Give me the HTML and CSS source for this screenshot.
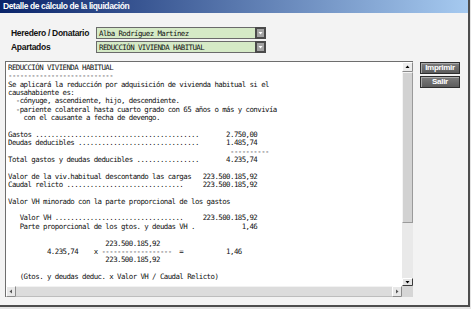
FILE: index.html
```html
<!DOCTYPE html>
<html lang="es">
<head>
  <meta charset="UTF-8" />
  <meta name="viewport" content="width=device-width, initial-scale=1.0"/>
  <title>Detalle de cálculo de la liquidación</title>
  <link rel="stylesheet" href="styles.css">
</head>
<body>
  <div class="window">
    <div class="titlebar">Detalle de cálculo de la liquidación</div>

    <div class="content">
      <div class="fields">
        <div class="field">
          <label>Heredero / Donatario</label>
          <div class="combo">
            <span class="combo-value">Alba Rodríguez Martínez</span>
            <svg class="combo-btn" width="11" height="12" viewBox="0 0 11 12">
              <rect x="0" y="0" width="11" height="12" fill="#4a4a4a"/>
              <rect x="2" y="2" width="7" height="8" fill="#a3a3a3"/>
              <polygon points="3.5,5 7.5,5 5.5,7.5" fill="#fff"/>
            </svg>
          </div>
        </div>
        <div class="field">
          <label>Apartados</label>
          <div class="combo">
            <span class="combo-value">REDUCCIÓN VIVIENDA HABITUAL</span>
            <svg class="combo-btn" width="11" height="12" viewBox="0 0 11 12">
              <rect x="0" y="0" width="11" height="12" fill="#4a4a4a"/>
              <rect x="2" y="2" width="7" height="8" fill="#a3a3a3"/>
              <polygon points="3.5,5 7.5,5 5.5,7.5" fill="#fff"/>
            </svg>
          </div>
        </div>
      </div>

      <div class="main">
        <div class="report">
<pre class="report-text">REDUCCIÓN VIVIENDA HABITUAL
---------------------------
Se aplicará la reducción por adquisición de vivienda habitual si el
causahabiente es:
  -cónyuge, ascendiente, hijo, descendiente.
  -pariente colateral hasta cuarto grado con 65 años o más y convivía
    con el causante a fecha de devengo.

Gastos ..........................................       2.750,00
Deudas deducibles ...............................       1.485,74
                                                         ----------
Total gastos y deudas deducibles ................       4.235,74

Valor de la viv.habitual descontando las cargas   223.500.185,92
Caudal relicto ..............................     223.500.185,92

Valor VH minorado con la parte proporcional de los gastos

   Valor VH .................................     223.500.185,92
   Parte proporcional de los gtos. y deudas VH .            1,46

                         223.500.185,92
          4.235,74    x ------------------  =           1,46
                         223.500.185,92

   (Gtos. y deudas deduc. x Valor VH / Caudal Relicto)
</pre>
          <div class="vscroll">
            <svg class="sb-btn" width="11" height="10" viewBox="0 0 11 10">
              <rect x="0" y="0" width="11" height="10" fill="#ececec"/>
              <path d="M0.5 9.5 V0.5 H10.5" stroke="#fff" fill="none"/>
              <path d="M0.5 9.5 H10.5 V0.5" stroke="#8a8a8a" fill="none"/>
              <polygon points="3.5,6 7.5,6 5.5,3.5" fill="#000"/>
            </svg>
            <div class="vthumb"></div>
            <div class="vtrack"></div>
            <svg class="sb-btn" width="11" height="8" viewBox="0 0 11 8">
              <rect x="0" y="0" width="11" height="8" fill="#e4e4e4"/>
              <path d="M0.5 7.5 V0.5 H10.5" stroke="#fff" fill="none"/>
              <path d="M0.5 7.5 H10.5 V0.5" stroke="#3a3a3a" fill="none"/>
              <polygon points="3.5,3 7.5,3 5.5,5.5" fill="#000"/>
            </svg>
          </div>
          <div class="hscroll">
            <svg class="sb-btn" width="10" height="11" viewBox="0 0 10 11">
              <rect x="0" y="0" width="10" height="11" fill="#e8e8e8"/>
              <path d="M0.5 10.5 V0.5 H9.5" stroke="#fff" fill="none"/>
              <path d="M0.5 10.5 H9.5 V0.5" stroke="#8a8a8a" fill="none"/>
              <polygon points="6,3.5 6,7.5 3.5,5.5" fill="#555"/>
            </svg>
            <div class="htrack"></div>
            <svg class="sb-btn" width="10" height="11" viewBox="0 0 10 11">
              <rect x="0" y="0" width="10" height="11" fill="#e8e8e8"/>
              <path d="M0.5 10.5 V0.5 H9.5" stroke="#fff" fill="none"/>
              <path d="M0.5 10.5 H9.5 V0.5" stroke="#8a8a8a" fill="none"/>
              <polygon points="4,3.5 4,7.5 6.5,5.5" fill="#555"/>
            </svg>
          </div>
          <div class="corner"></div>
        </div>

        <div class="actions">
          <button class="btn">Imprimir</button>
          <button class="btn">Salir</button>
        </div>
      </div>
    </div>
  </div>
</body>
</html>
```

FILE: styles.css
```css
body {
  margin: 0;
  background: #e4e4e4;
  font-family: "Liberation Sans", Arial, sans-serif;
}

.window {
  width: 470px;
  height: 307px;
  box-sizing: border-box;
  display: flex;
  flex-direction: column;
  background: #f3f3f3;
  border-right: 2px solid #4d4d4d;
  border-bottom: 2px solid #4d4d4d;
}

.titlebar {
  height: 13px;
  line-height: 13px;
  padding-left: 3px;
  background: linear-gradient(to right, #0a246a, #a6caf0);
  color: #fff;
  font-weight: bold;
  font-size: 8.5px;
  letter-spacing: -0.4px;
}

.content {
  flex: 1;
  padding: 14px 0 0 5px;
}

.fields {
  display: flex;
  flex-direction: column;
  gap: 2px;
  padding-left: 6px;
}

.field {
  display: flex;
  align-items: center;
  height: 12px;
}

.field label {
  width: 85px;
  font-weight: bold;
  font-size: 8.5px;
  letter-spacing: -0.3px;
  color: #111;
}

.combo {
  width: 170px;
  height: 12px;
  box-sizing: border-box;
  display: flex;
  align-items: center;
  border: 1px solid #6a6a6a;
  border-right: none;
  background: #d5eac6;
}

.combo-value {
  flex: 1;
  padding-left: 2px;
  font-family: "DejaVu Sans Mono", monospace;
  font-size: 7.4px;
  letter-spacing: -0.555px;
  color: #111;
}

.combo-btn {
  display: block;
  margin: -1px 0;
}

.main {
  display: flex;
  margin-top: 8px;
}

.report {
  width: 408px;
  height: 236px;
  box-sizing: border-box;
  display: grid;
  grid-template-columns: 1fr 11px;
  grid-template-rows: 1fr 11px;
  border-top: 1px solid #6e6e6e;
  border-left: 1px solid #6e6e6e;
  background: #fff;
}

.report-text {
  margin: 0;
  padding: 2px 0 0 2px;
  overflow: hidden;
  white-space: pre;
  font-family: "DejaVu Sans Mono", monospace;
  font-size: 7.4px;
  letter-spacing: -0.555px;
  line-height: 8.36px;
  color: #111;
}

.sb-btn {
  display: block;
  flex: none;
}

.vscroll {
  display: flex;
  flex-direction: column;
}

.vthumb {
  height: 151px;
  box-sizing: border-box;
  background: #d2d2d2;
  border: 1px solid #9a9a9a;
  border-top-color: #f4f4f4;
  border-left-color: #f4f4f4;
}

.vtrack {
  flex: 1;
  background: #e9e9e9;
}

.hscroll {
  display: flex;
}

.htrack {
  flex: 1;
  background: #dcdcdc;
  border-top: 1px solid #f2f2f2;
  border-bottom: 1px solid #bdbdbd;
}

.corner {
  background: #d6d6d6;
}

.actions {
  display: flex;
  flex-direction: column;
  gap: 2px;
  margin-left: 7px;
  padding-top: 1px;
}

.btn {
  width: 40px;
  height: 12px;
  padding: 0;
  border: 1px solid #2e2e2e;
  background: linear-gradient(#7d7d7d, #5c5c5c);
  box-shadow: inset 1px 1px #a9a9a9;
  color: #fff;
  font-family: "Liberation Sans", Arial, sans-serif;
  font-weight: bold;
  font-size: 8px;
  letter-spacing: -0.3px;
  line-height: 10px;
  cursor: pointer;
}
```
